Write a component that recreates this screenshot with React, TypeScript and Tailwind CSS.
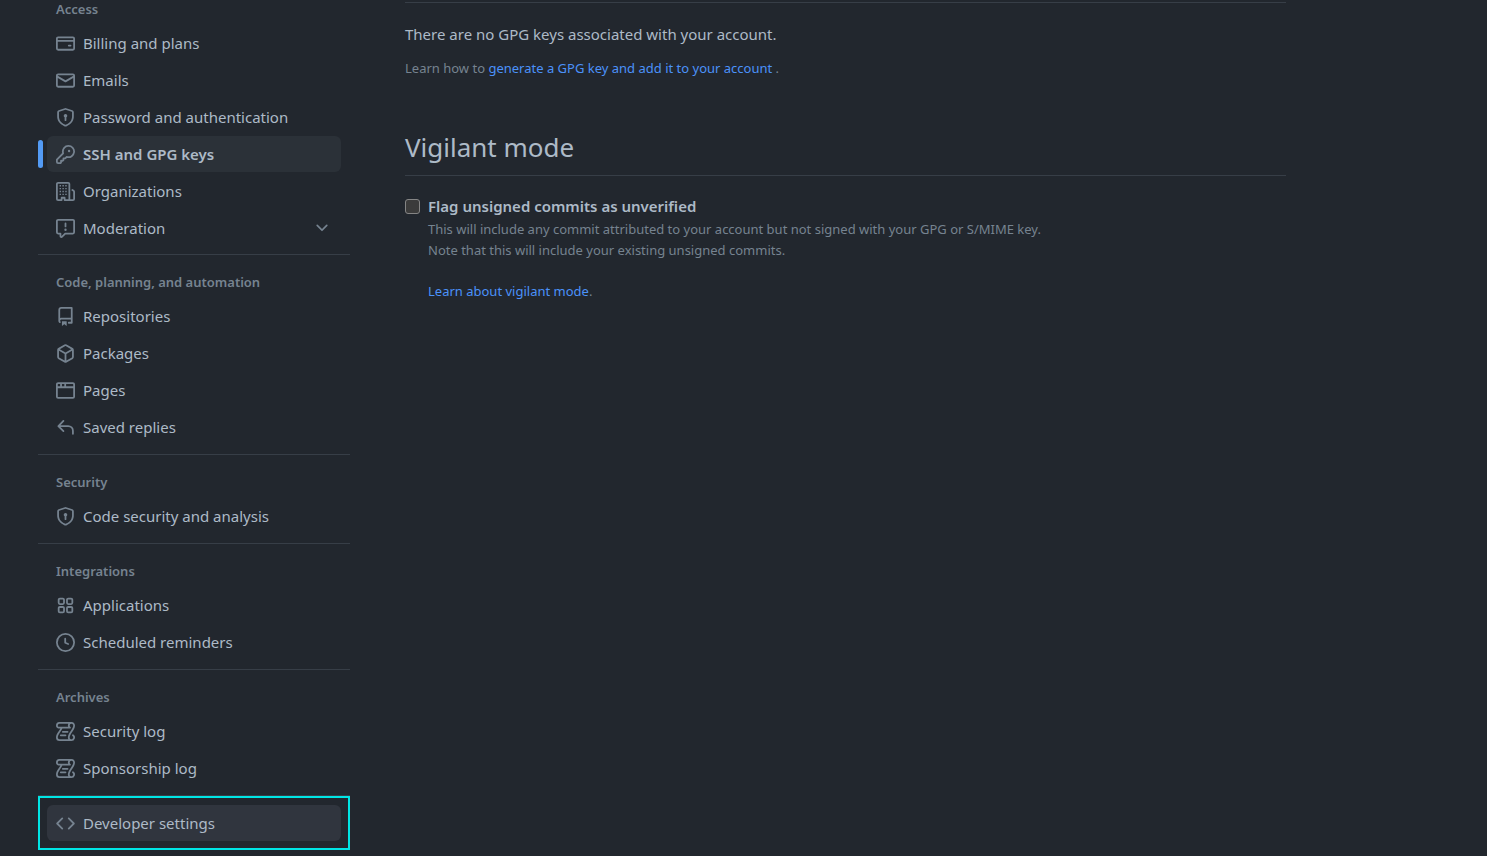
import type { ReactNode } from 'react'

type IconName = keyof typeof icons

type NavItem = {
  label: string
  icon: IconName
  active?: boolean
}

type NavGroup = {
  title: string
  items: NavItem[]
}

const icons = {
  creditCard:
    'M10.75 9a.75.75 0 0 0 0 1.5h1.5a.75.75 0 0 0 0-1.5h-1.5ZM0 3.75C0 2.784.784 2 1.75 2h12.5c.966 0 1.75.784 1.75 1.75v8.5A1.75 1.75 0 0 1 14.25 14H1.75A1.75 1.75 0 0 1 0 12.25ZM14.5 6.5h-13v5.75c0 .138.112.25.25.25h12.5a.25.25 0 0 0 .25-.25Zm0-2.75a.25.25 0 0 0-.25-.25H1.75a.25.25 0 0 0-.25.25V5h13Z',
  mail: 'M1.75 2h12.5c.966 0 1.75.784 1.75 1.75v8.5A1.75 1.75 0 0 1 14.25 14H1.75A1.75 1.75 0 0 1 0 12.25v-8.5C0 2.784.784 2 1.75 2ZM1.5 12.251c0 .138.112.25.25.25h12.5a.25.25 0 0 0 .25-.25V5.809L8.38 9.397a.75.75 0 0 1-.76 0L1.5 5.809v6.442Zm13-8.181v-.32a.25.25 0 0 0-.25-.25H1.75a.25.25 0 0 0-.25.25v.32L8 7.88Z',
  shieldLock:
    'm8.533.133 5.25 1.68A1.75 1.75 0 0 1 15 3.48V7c0 1.566-.32 3.182-1.303 4.682-.983 1.498-2.585 2.813-5.032 3.855a1.697 1.697 0 0 1-1.33 0c-2.447-1.042-4.049-2.357-5.032-3.855C1.32 10.182 1 8.566 1 7V3.48a1.755 1.755 0 0 1 1.217-1.667l5.25-1.68a1.748 1.748 0 0 1 1.066 0Zm-.61 1.429.001.001-5.25 1.68a.251.251 0 0 0-.174.237V7c0 1.36.275 2.666 1.057 3.859.784 1.194 2.121 2.342 4.366 3.298a.196.196 0 0 0 .154 0c2.245-.957 3.582-2.103 4.366-3.297C13.225 9.666 13.5 8.358 13.5 7V3.48a.25.25 0 0 0-.174-.238l-5.25-1.68a.25.25 0 0 0-.153 0ZM9.5 6.5c0 .536-.286 1.032-.75 1.3v2.45a.75.75 0 0 1-1.5 0V7.8A1.5 1.5 0 1 1 9.5 6.5Z',
  key: 'M10.5 0a5.499 5.499 0 1 1-1.288 10.848l-.932.932a.749.749 0 0 1-.53.22H7v.75a.749.749 0 0 1-.22.53l-.5.5a.749.749 0 0 1-.53.22H5v.75a.749.749 0 0 1-.22.53l-.5.5a.749.749 0 0 1-.53.22h-2A1.75 1.75 0 0 1 0 14.25v-2c0-.199.079-.389.22-.53l4.932-4.932A5.5 5.5 0 0 1 10.5 0Zm-4 5.5c-.001.431.069.86.205 1.269a.75.75 0 0 1-.181.768L1.5 12.56v1.69c0 .138.112.25.25.25h1.69l.06-.06v-1.19a.75.75 0 0 1 .75-.75h1.19l.06-.06v-1.19a.75.75 0 0 1 .75-.75h1.19l1.023-1.025a.75.75 0 0 1 .768-.18A4 4 0 1 0 6.5 5.5ZM11 6a1 1 0 1 1 0-2 1 1 0 0 1 0 2Z',
  organization:
    'M1.75 16A1.75 1.75 0 0 1 0 14.25V1.75C0 .784.784 0 1.75 0h8.5C11.216 0 12 .784 12 1.75v12.5c0 .085-.006.168-.018.25h2.268a.25.25 0 0 0 .25-.25V8.285a.25.25 0 0 0-.111-.208l-1.055-.703a.749.749 0 1 1 .832-1.248l1.055.703c.487.325.779.871.779 1.456v5.965A1.75 1.75 0 0 1 14.25 16h-3.5a.766.766 0 0 1-.197-.026c-.099.017-.2.026-.303.026h-3a.75.75 0 0 1-.75-.75V14h-1v1.25a.75.75 0 0 1-.75.75Zm-.25-1.75c0 .138.112.25.25.25H4v-1.25a.75.75 0 0 1 .75-.75h2.5a.75.75 0 0 1 .75.75v1.25h2.25a.25.25 0 0 0 .25-.25V1.75a.25.25 0 0 0-.25-.25h-8.5a.25.25 0 0 0-.25.25ZM3 2.6h1.2v1.2H3ZM5.4 2.6h1.2v1.2H5.4ZM7.8 2.6H9v1.2H7.8ZM3 5h1.2v1.2H3ZM5.4 5h1.2v1.2H5.4ZM7.8 5H9v1.2H7.8ZM3 7.4h1.2v1.2H3ZM5.4 7.4h1.2v1.2H5.4ZM7.8 7.4H9v1.2H7.8ZM3 9.8h1.2V11H3ZM5.4 9.8h1.2V11H5.4ZM7.8 9.8H9V11H7.8Z',
  report:
    'M0 1.75C0 .784.784 0 1.75 0h12.5C15.216 0 16 .784 16 1.75v9.5A1.75 1.75 0 0 1 14.25 13H8.06l-2.573 2.573A1.458 1.458 0 0 1 3 14.543V13H1.75A1.75 1.75 0 0 1 0 11.25Zm1.75-.25a.25.25 0 0 0-.25.25v9.5c0 .138.112.25.25.25h2a.75.75 0 0 1 .75.75v2.19l2.72-2.72a.749.749 0 0 1 .53-.22h6.5a.25.25 0 0 0 .25-.25v-9.5a.25.25 0 0 0-.25-.25Zm7 2.25v2.5a.75.75 0 0 1-1.5 0v-2.5a.75.75 0 0 1 1.5 0ZM9 9a1 1 0 1 1-2 0 1 1 0 0 1 2 0Z',
  chevronDown:
    'M12.78 5.22a.749.749 0 0 1 0 1.06l-4.25 4.25a.749.749 0 0 1-1.06 0L3.22 6.28a.749.749 0 1 1 1.06-1.06L8 8.939l3.72-3.719a.749.749 0 0 1 1.06 0Z',
  repo: 'M2 2.5A2.5 2.5 0 0 1 4.5 0h8.75a.75.75 0 0 1 .75.75v12.5a.75.75 0 0 1-.75.75h-2.5a.75.75 0 0 1 0-1.5h1.75v-2h-8a1 1 0 0 0-.714 1.7.75.75 0 1 1-1.072 1.05A2.495 2.495 0 0 1 2 11.5Zm10.5-1h-8a1 1 0 0 0-1 1v6.708A2.486 2.486 0 0 1 4.5 9h8ZM5 12.25a.25.25 0 0 1 .25-.25h3.5a.25.25 0 0 1 .25.25v3.25a.25.25 0 0 1-.4.2l-1.45-1.087a.249.249 0 0 0-.3 0L5.4 15.7a.25.25 0 0 1-.4-.2Z',
  package:
    'm8.878.392 5.25 3.045c.54.314.872.89.872 1.514v6.098a1.75 1.75 0 0 1-.872 1.514l-5.25 3.045a1.75 1.75 0 0 1-1.756 0l-5.25-3.045A1.75 1.75 0 0 1 1 11.049V4.951c0-.624.332-1.201.872-1.514L7.122.392a1.75 1.75 0 0 1 1.756 0ZM7.875 1.69l-4.63 2.685L8 7.133l4.755-2.758-4.63-2.685a.248.248 0 0 0-.25 0ZM2.5 5.677v5.372c0 .09.047.171.125.216l4.625 2.683V8.432Zm6.25 8.271 4.625-2.683a.25.25 0 0 0 .125-.216V5.677L8.75 8.432Z',
  browser:
    'M0 2.75C0 1.784.784 1 1.75 1h12.5c.966 0 1.75.784 1.75 1.75v10.5A1.75 1.75 0 0 1 14.25 15H1.75A1.75 1.75 0 0 1 0 13.25ZM14.5 6h-13v7.25c0 .138.112.25.25.25h12.5a.25.25 0 0 0 .25-.25Zm-6-3.5v2h6V2.75a.25.25 0 0 0-.25-.25ZM5 2.5v2h2v-2Zm-3.25 0a.25.25 0 0 0-.25.25V4.5h2v-2Z',
  reply:
    'M6.78 1.97a.75.75 0 0 1 0 1.06L3.81 6h6.44A4.75 4.75 0 0 1 15 10.75v2.5a.75.75 0 0 1-1.5 0v-2.5a3.25 3.25 0 0 0-3.25-3.25H3.81l2.97 2.97a.749.749 0 0 1-.326 1.275.749.749 0 0 1-.734-.215L1.47 7.28a.75.75 0 0 1 0-1.06l4.25-4.25a.75.75 0 0 1 1.06 0Z',
  apps: 'M1.5 3.25c0-.966.784-1.75 1.75-1.75h2.5c.966 0 1.75.784 1.75 1.75v2.5A1.75 1.75 0 0 1 5.75 7.5h-2.5A1.75 1.75 0 0 1 1.5 5.75Zm7 0c0-.966.784-1.75 1.75-1.75h2.5c.966 0 1.75.784 1.75 1.75v2.5a1.75 1.75 0 0 1-1.75 1.75h-2.5A1.75 1.75 0 0 1 8.5 5.75Zm-7 7c0-.966.784-1.75 1.75-1.75h2.5c.966 0 1.75.784 1.75 1.75v2.5a1.75 1.75 0 0 1-1.75 1.75h-2.5a1.75 1.75 0 0 1-1.75-1.75Zm7 0c0-.966.784-1.75 1.75-1.75h2.5c.966 0 1.75.784 1.75 1.75v2.5a1.75 1.75 0 0 1-1.75 1.75h-2.5a1.75 1.75 0 0 1-1.75-1.75ZM3.25 3a.25.25 0 0 0-.25.25v2.5c0 .138.112.25.25.25h2.5A.25.25 0 0 0 6 5.75v-2.5A.25.25 0 0 0 5.75 3Zm7 0a.25.25 0 0 0-.25.25v2.5c0 .138.112.25.25.25h2.5a.25.25 0 0 0 .25-.25v-2.5a.25.25 0 0 0-.25-.25Zm-7 7a.25.25 0 0 0-.25.25v2.5c0 .138.112.25.25.25h2.5a.25.25 0 0 0 .25-.25v-2.5a.25.25 0 0 0-.25-.25Zm7 0a.25.25 0 0 0-.25.25v2.5c0 .138.112.25.25.25h2.5a.25.25 0 0 0 .25-.25v-2.5a.25.25 0 0 0-.25-.25Z',
  clock:
    'M8 0a8 8 0 1 1 0 16A8 8 0 0 1 8 0ZM1.5 8a6.5 6.5 0 1 0 13 0 6.5 6.5 0 0 0-13 0Zm7-3.25v2.992l2.028.812a.75.75 0 0 1-.557 1.392l-2.5-1A.751.751 0 0 1 7 8.25v-3.5a.75.75 0 0 1 1.5 0Z',
  log: 'M5 8.25a.75.75 0 0 1 .75-.75h4a.75.75 0 0 1 0 1.5h-4A.75.75 0 0 1 5 8.25ZM4 10.5A.75.75 0 0 0 4 12h4a.75.75 0 0 0 0-1.5H4ZM13-.005c1.654 0 3 1.328 3 3 0 .982-.338 1.933-.783 2.818-.443.879-1.028 1.758-1.582 2.588l-.011.017c-.568.853-1.104 1.659-1.501 2.446-.398.789-.623 1.494-.623 2.136a1.5 1.5 0 1 0 2.333-1.248.75.75 0 0 1 .834-1.246A3 3 0 0 1 13 16H3a3 3 0 0 1-3-3c0-1.582.891-3.135 1.777-4.506.209-.322.418-.637.623-.946.473-.709.923-1.386 1.287-2.048H2.51c-.576 0-1.381-.133-1.907-.783A2.68 2.68 0 0 1 0 2.995a3 3 0 0 1 3-3Zm0 1.5a1.5 1.5 0 0 0-1.5 1.5c0 .476.223.834.667 1.132A.75.75 0 0 1 11.75 5.5H5.368c-.467 1.003-1.141 2.015-1.773 2.963-.192.289-.381.571-.558.845C2.13 10.711 1.5 11.916 1.5 13A1.5 1.5 0 0 0 3 14.5h7.401A2.989 2.989 0 0 1 10 13c0-.979.338-1.928.784-2.812.441-.874 1.023-1.748 1.575-2.576l.017-.026c.568-.853 1.103-1.658 1.501-2.448.398-.79.623-1.497.623-2.143 0-.838-.669-1.5-1.5-1.5Zm-10 0a1.5 1.5 0 0 0-1.5 1.5c0 .321.1.569.27.778.097.12.325.227.74.227h7.674A2.737 2.737 0 0 1 10 2.995c0-.546.146-1.059.401-1.5Z',
  code: 'm11.28 3.22 4.25 4.25a.75.75 0 0 1 0 1.06l-4.25 4.25a.749.749 0 0 1-1.275-.326.749.749 0 0 1 .215-.734L13.94 8l-3.72-3.72a.749.749 0 0 1 .326-1.275.749.749 0 0 1 .734.215Zm-6.56 0a.751.751 0 0 1 1.042.018.751.751 0 0 1 .018 1.042L2.06 8l3.72 3.72a.749.749 0 0 1-.326 1.275.749.749 0 0 1-.734-.215L.47 8.53a.75.75 0 0 1 0-1.06Z',
}

const accessItems: NavItem[] = [
  { label: 'Billing and plans', icon: 'creditCard' },
  { label: 'Emails', icon: 'mail' },
  { label: 'Password and authentication', icon: 'shieldLock' },
  { label: 'SSH and GPG keys', icon: 'key', active: true },
  { label: 'Organizations', icon: 'organization' },
]

const groups: NavGroup[] = [
  {
    title: 'Code, planning, and automation',
    items: [
      { label: 'Repositories', icon: 'repo' },
      { label: 'Packages', icon: 'package' },
      { label: 'Pages', icon: 'browser' },
      { label: 'Saved replies', icon: 'reply' },
    ],
  },
  {
    title: 'Security',
    items: [{ label: 'Code security and analysis', icon: 'shieldLock' }],
  },
  {
    title: 'Integrations',
    items: [
      { label: 'Applications', icon: 'apps' },
      { label: 'Scheduled reminders', icon: 'clock' },
    ],
  },
  {
    title: 'Archives',
    items: [
      { label: 'Security log', icon: 'log' },
      { label: 'Sponsorship log', icon: 'log' },
    ],
  },
]

function Icon({
  name,
  className = 'size-[19px]',
}: {
  name: IconName
  className?: string
}) {
  return (
    <svg
      aria-hidden="true"
      viewBox="0 0 16 16"
      className={`shrink-0 fill-[#768390] ${className}`}
    >
      <path d={icons[name]} />
    </svg>
  )
}

function GroupTitle({ children }: { children: ReactNode }) {
  return (
    <h3 className="pl-[18px] pb-[7px] text-[13px] leading-[18px] font-semibold text-[#768390]">
      {children}
    </h3>
  )
}

function NavLink({ item }: { item: NavItem }) {
  return (
    <li className="relative px-[9px]">
      {item.active && (
        <span className="absolute left-0 top-1 h-7 w-[5px] rounded-md bg-[#539bf5]" />
      )}
      <a
        href="#"
        aria-current={item.active ? 'page' : undefined}
        className={
          item.active
            ? 'flex h-9 items-center gap-2 rounded-md bg-[#2b3138] px-[9px] font-semibold'
            : 'flex h-9 items-center gap-2 rounded-md px-[9px]'
        }
      >
        <Icon name={item.icon} />
        {item.label}
      </a>
    </li>
  )
}

function Sidebar() {
  return (
    <nav
      aria-label="Settings"
      className="w-[312px] shrink-0 text-[15px] leading-[22px]"
    >
      <GroupTitle>Access</GroupTitle>
      <ul className="mb-2 flex flex-col gap-px">
        {accessItems.map((item) => (
          <NavLink key={item.label} item={item} />
        ))}
        <li className="px-[9px]">
          <button
            type="button"
            aria-expanded="false"
            className="flex h-9 w-full items-center gap-2 rounded-md pr-[10px] pl-[9px] text-left"
          >
            <Icon name="report" />
            <span className="grow">Moderation</span>
            <Icon name="chevronDown" className="size-[18px]" />
          </button>
        </li>
      </ul>

      {groups.map((group) => (
        <section
          key={group.title}
          className="border-t border-[#373e47] pt-[18px] pb-[9px]"
        >
          <GroupTitle>{group.title}</GroupTitle>
          <ul className="flex flex-col gap-px">
            {group.items.map((item) => (
              <NavLink key={item.label} item={item} />
            ))}
          </ul>
        </section>
      ))}

      <div className="border-t border-[#373e47]">
        <div className="border-2 border-[#00e5e5] p-[7px]">
          <a
            href="#"
            className="flex h-9 items-center gap-2 rounded-md bg-[#30353e] px-[9px]"
          >
            <Icon name="code" />
            Developer settings
          </a>
        </div>
      </div>
    </nav>
  )
}

export default function App() {
  return (
    <div className="flex min-h-screen gap-[55px] bg-[#22272e] pl-[38px] font-['Noto_Sans',sans-serif] text-[#adbac7]">
      <Sidebar />
      <main className="mr-10 mt-[2px] max-w-[881px] grow">
        <section className="border-t border-[#373e47] pt-[19px]">
          <p className="text-[15px] leading-6">
            There are no GPG keys associated with your account.
          </p>
          <p className="mt-3 text-[13px] leading-[21px] text-[#768390]">
            Learn how to{' '}
            <a href="#" className="text-[#4b92fa]">
              generate a GPG key and add it to your account
            </a>{' '}
            .
          </p>
        </section>

        <section className="mt-12">
          <h2 className="border-b border-[#373e47] pb-2 text-[26px] leading-10">
            Vigilant mode
          </h2>
          <div className="mt-5 flex gap-2">
            <input
              id="vigilant"
              type="checkbox"
              className="mt-[3px] size-[15px] shrink-0 appearance-none rounded-[3px] border border-[#858585] bg-[#3b3b3b]"
            />
            <div className="text-[13px] leading-[21px] text-[#768390]">
              <label
                htmlFor="vigilant"
                className="block text-[15px] leading-[21px] font-semibold text-[#adbac7]"
              >
                Flag unsigned commits as unverified
              </label>
              <p className="mt-0.5">
                This will include any commit attributed to your account but not
                signed with your GPG or S/MIME key.
                <br />
                Note that this will include your existing unsigned commits.
              </p>
              <p className="mt-5">
                <a href="#" className="text-[#4b92fa]">
                  Learn about vigilant mode
                </a>
                .
              </p>
            </div>
          </div>
        </section>
      </main>
    </div>
  )
}
